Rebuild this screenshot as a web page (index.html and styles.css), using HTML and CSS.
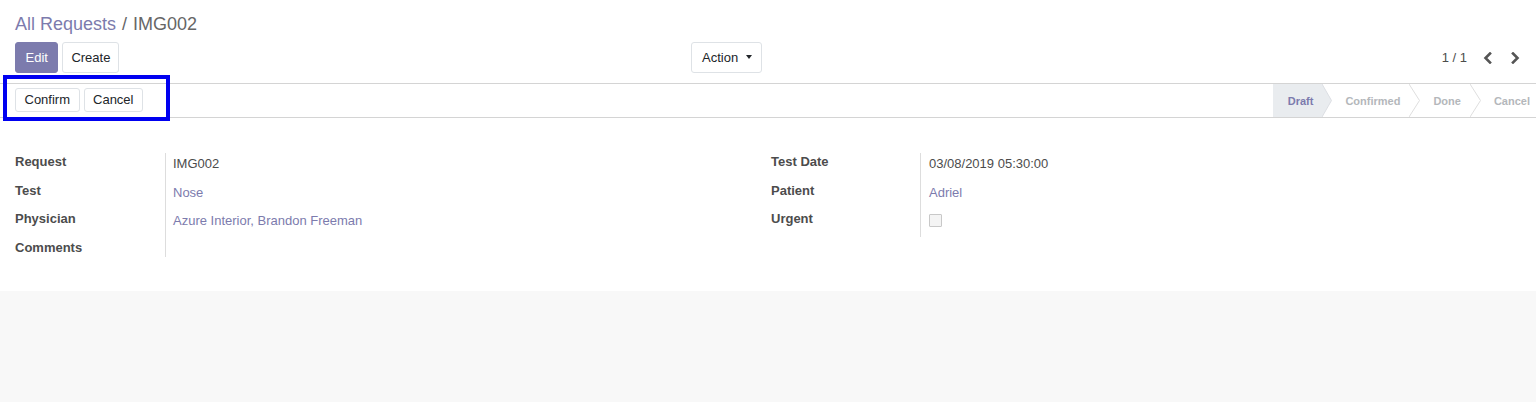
FILE: index.html
```html
<!DOCTYPE html>
<html lang="en">
<head>
<meta charset="utf-8">
<title>IMG002</title>
<link rel="stylesheet" href="styles.css">
</head>
<body>
<div class="app">
  <div class="cp">
    <div class="breadcrumb">
      <a class="bc-link" href="#">All Requests</a><span class="bc-sep">/</span><span class="bc-active">IMG002</span>
    </div>
    <div class="cp-bottom">
      <div class="cp-buttons">
        <button class="btn btn-primary">Edit</button>
        <button class="btn btn-secondary">Create</button>
      </div>
      <div class="cp-sidebar">
        <button class="btn btn-secondary btn-dropdown">Action<span class="caret"></span></button>
      </div>
      <div class="pager">
        <span class="pager-value">1 / 1</span>
        <button class="pager-btn" aria-label="Previous">
          <svg width="10" height="12" viewBox="0 0 10 12"><polyline points="7,1.5 2.5,6 7,10.5" fill="none" stroke="#555" stroke-width="2.6" stroke-linecap="square"/></svg>
        </button>
        <button class="pager-btn" aria-label="Next">
          <svg width="10" height="12" viewBox="0 0 10 12"><polyline points="3,1.5 7.5,6 3,10.5" fill="none" stroke="#555" stroke-width="2.6" stroke-linecap="square"/></svg>
        </button>
      </div>
    </div>
  </div>

  <div class="form">
    <div class="statusbar">
      <div class="sb-buttons">
        <button class="btn btn-secondary btn-sm">Confirm</button>
        <button class="btn btn-secondary btn-sm">Cancel</button>
      </div>
      <div class="sb-status">
        <div class="st st-active"><span class="st-label">Draft</span></div>
        <svg class="st-arrow" width="10" height="33" viewBox="0 0 10 33"><polygon points="0,0 9.5,16.5 0,33" fill="#e9ecef"/><polyline points="0,0 9.5,16.5 0,33" fill="none" stroke="#dcdfe3" stroke-width="1"/></svg>
        <div class="st"><span class="st-label">Confirmed</span></div>
        <svg class="st-arrow" width="11" height="33" viewBox="0 0 11 33"><polyline points="0,0 10.5,16.5 0,33" fill="none" stroke="#dedede" stroke-width="1"/></svg>
        <div class="st"><span class="st-label">Done</span></div>
        <svg class="st-arrow" width="11" height="33" viewBox="0 0 11 33"><polyline points="0,0 10.5,16.5 0,33" fill="none" stroke="#dedede" stroke-width="1"/></svg>
        <div class="st st-last"><span class="st-label">Cancel</span></div>
      </div>
    </div>

    <div class="sheet">
      <div class="group group-left">
        <div class="row"><div class="label">Request</div><div class="value">IMG002</div></div>
        <div class="row"><div class="label">Test</div><div class="value"><a class="link" href="#">Nose</a></div></div>
        <div class="row"><div class="label">Physician</div><div class="value"><a class="link" href="#">Azure Interior, Brandon Freeman</a></div></div>
        <div class="row row-empty"><div class="label">Comments</div><div class="value"></div></div>
      </div>
      <div class="group group-right">
        <div class="row"><div class="label">Test Date</div><div class="value">03/08/2019 05:30:00</div></div>
        <div class="row"><div class="label">Patient</div><div class="value"><a class="link" href="#">Adriel</a></div></div>
        <div class="row row-check"><div class="label">Urgent</div><div class="value"><span class="checkbox"></span></div></div>
      </div>
    </div>
  </div>

  <div class="rest"></div>

  <div class="highlight"></div>
</div>
</body>
</html>
```

FILE: styles.css
```css
* { box-sizing: border-box; }

html, body {
  margin: 0;
  padding: 0;
}

body {
  font-family: "Liberation Sans", Arial, sans-serif;
  font-size: 13px;
  color: #4c4c4c;
  background: #f9f9f9;
}

.app {
  position: relative;
  width: 1536px;
  min-height: 402px;
  display: flex;
  flex-direction: column;
  background: #f8f8f8;
}

/* Control panel */
.cp {
  background: #fff;
  padding: 12px 8px 10px 15px;
}

.breadcrumb {
  font-size: 18px;
  line-height: 24px;
  height: 24px;
  margin-bottom: 6px;
  white-space: nowrap;
}

.bc-link {
  color: #7c7bad;
  text-decoration: none;
}

.bc-sep {
  color: #666;
  padding: 0 6px;
}

.bc-active {
  color: #666;
}

.cp-bottom {
  display: grid;
  grid-template-columns: 676px auto 1fr;
  align-items: center;
  height: 31px;
}

.cp-buttons {
  display: flex;
  gap: 4px;
}

.btn {
  font-family: "Liberation Sans", Arial, sans-serif;
  font-size: 13px;
  height: 31px;
  padding: 0 8px;
  border-radius: 3px;
  border: 1px solid #dee2e6;
  background: #fff;
  color: #212529;
  cursor: pointer;
  line-height: 29px;
}

.btn-primary {
  background: #7c7bad;
  border-color: #7c7bad;
  color: #fff;
  padding: 0 9.5px;
}

.btn-dropdown {
  display: flex;
  align-items: center;
  padding: 0 10px;
  width: 71px;
}

.caret {
  display: inline-block;
  margin-left: 8px;
  width: 0;
  height: 0;
  border-left: 3px solid transparent;
  border-right: 3px solid transparent;
  border-top: 4px solid #212529;
  margin-top: -1px;
}

.pager {
  justify-self: end;
  display: flex;
  align-items: center;
}

.pager-value {
  color: #4c4c4c;
  margin-right: 7px;
}

.pager-btn {
  width: 27px;
  height: 31px;
  border: none;
  background: transparent;
  padding: 0;
  display: flex;
  align-items: center;
  justify-content: center;
  cursor: pointer;
}

/* Form */
.form {
  background: #fff;
}

.statusbar {
  display: flex;
  justify-content: space-between;
  border-top: 1px solid #d4d4d4;
  border-bottom: 1px solid #d4d4d4;
  height: 35px;
  padding-left: 15px;
}

.sb-buttons {
  display: flex;
  gap: 4px;
  padding-top: 4px;
}

.btn-sm {
  height: 24px;
  line-height: 22px;
  font-size: 13px;
  padding: 0 8.5px;
}

.sb-status {
  display: flex;
  align-items: stretch;
  height: 33px;
}

.st {
  display: flex;
  align-items: center;
  padding: 0 9px 0 13px;
  font-size: 11px;
  font-weight: bold;
  color: #b4b7bb;
}

.st-active {
  background: #e9ecef;
  color: #7c7bad;
  padding-left: 15px;
}

.st-last {
  padding-right: 6px;
}

.st-arrow {
  display: block;
  flex: none;
}

.sheet {
  display: grid;
  grid-template-columns: 756px 1fr;
  padding: 35px 0 34px 15px;
}

.group {
  display: flex;
  flex-direction: column;
}

.row {
  display: grid;
  grid-template-columns: 150px 1fr;
  height: 28.67px;
}

.group-right .row {
  grid-template-columns: 149px 1fr;
}

.row-empty {
  height: 18px;
}

.row-check {
  height: 26.7px;
}

.label {
  font-weight: bold;
  line-height: 17px;
  color: #4c4c4c;
}

.value {
  border-left: 1px solid #ddd;
  padding: 2px 0 0 7px;
  line-height: 17px;
  color: #4c4c4c;
}

.group-right .value {
  padding-left: 8px;
}

.row-check .value {
  padding-top: 4px;
}

.link {
  color: #7c7bad;
  text-decoration: none;
}

.checkbox {
  display: block;
  width: 13px;
  height: 13px;
  border: 1px solid #c8c8c8;
  background: #f4f4f4;
  border-radius: 1px;
}

.rest {
  flex: 1;
  background: #f8f8f8;
}

/* Annotation overlay */
.highlight {
  position: absolute;
  left: 3px;
  top: 75px;
  width: 167px;
  height: 46px;
  border: 4px solid #0000f0;
  pointer-events: none;
}
```
